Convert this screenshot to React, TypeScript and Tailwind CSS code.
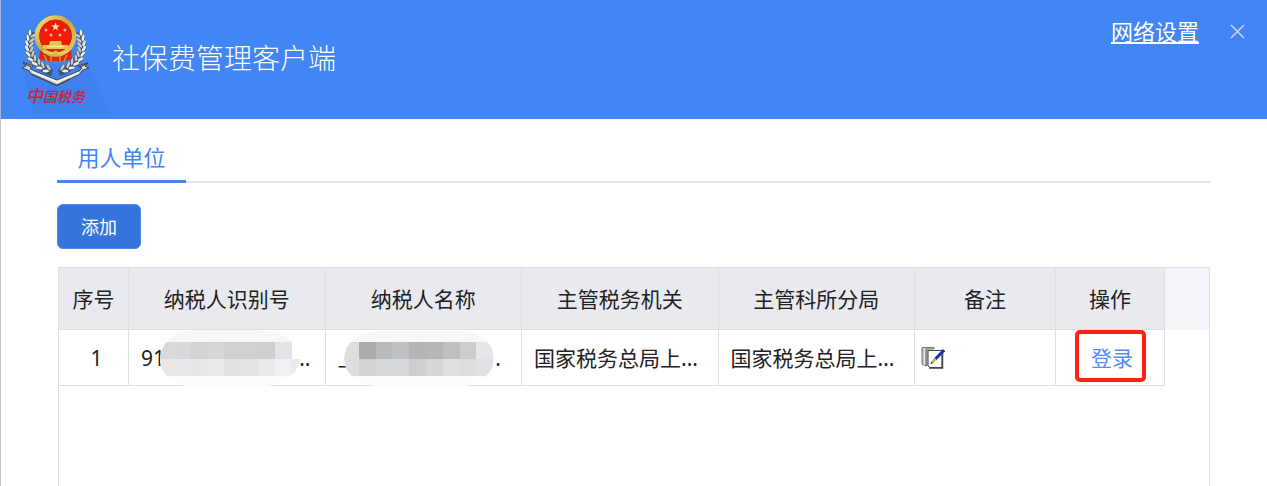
import clsx from "clsx";

type Unit = {
  id: number;
  authority: string;
  branch: string;
};

const units: Unit[] = [
  { id: 1, authority: "国家税务总局上...", branch: "国家税务总局上..." },
];

const headers = [
  "序号",
  "纳税人识别号",
  "纳税人名称",
  "主管税务机关",
  "主管科所分局",
  "备注",
  "操作",
];

const idMask = {
  outline: "M34 0 H96 Q122 1 132 12 V29 H140 Q139 42 124 50 Q112 57 98 57 H30 Q1 51 0 29 Q2 3 34 0 Z",
  top: ["#dad9d9", "#d5d9de", "#d3d3d5", "#d6d6d6", "#d0d0d2", "#d0d0d1", "#d0cfcf", "#e2e4e7"],
  bottom: ["#e9e7e6", "#e7e9ec", "#e7e7e8", "#edeae8", "#e2e2e3", "#e3e3e4", "#ebebec", "#eff1f5", "#eaebed"],
};

const nameMask = {
  outline: "M34 1 H116 Q149 4 150 29 Q149 50 118 57 H34 Q1 51 0 29 Q2 4 34 1 Z",
  top: ["#dedddd", "#adabaa", "#b9babc", "#bfc0c3", "#b4b4b5", "#b6b6b6", "#bfbfc0", "#cdcdce", "#e4e6ea"],
  bottom: ["#dedddd", "#d3d2d1", "#d6d9db", "#d6d9da", "#cdced0", "#d5d6d8", "#e0e0e1", "#dfdcda", "#e0e1e4"],
};

/** Pixelated pill that hides private values. */
function Mask({
  id,
  width,
  offset,
  colors,
}: {
  id: string;
  width: number;
  offset: number;
  colors: { outline: string; top: string[]; bottom: string[] };
}) {
  return (
    <svg width={width} height={57} viewBox={`0 0 ${width} 57`} aria-hidden="true">
      <clipPath id={id}>
        <path d={colors.outline} />
      </clipPath>
      <g clipPath={`url(#${id})`} shapeRendering="crispEdges">
        <rect width={width} height="57" fill="#f8f8f8" />
        <rect y="46" width={width} height="11" fill="#fcfcfb" />
        {colors.top.map((c, i) => (
          <rect key={i} x={offset + i * 16.8} y="12" width="17" height="17" fill={c} />
        ))}
        {colors.bottom.map((c, i) => (
          <rect key={i} x={offset + i * 16.8} y="29" width="17" height="17" fill={c} />
        ))}
      </g>
    </svg>
  );
}

const leaves = [
  [32, 33, -30],
  [30, 38, -20],
  [29, 43, -10],
  [29, 48, 2],
  [30, 53, 14],
  [32, 58, 26],
  [36, 62, 38],
  [40, 66, 50],
  [46, 69, 62],
];

function Wreath() {
  return (
    <g>
      <path d="M33 32 Q26 46 34 60 Q42 70 52 73" fill="none" stroke="#3d5878" strokeWidth="7" />
      {leaves.map(([x, y, r]) => (
        <g key={y} transform={`translate(${x} ${y}) rotate(${-r})`}>
          <ellipse cx="-2" cy="1" rx="2" ry="4.4" fill="#38434f" transform="rotate(-30)" />
          <ellipse cx="-2" cy="0" rx="1.4" ry="3.6" fill="#eceff3" transform="rotate(-30)" />
          <ellipse cx="3" cy="1" rx="2" ry="4.400" fill="#4a545f" transform="rotate(30)" />
          <ellipse cx="3" cy="0" rx="1.3" ry="3.4" fill="#c3cbd4" transform="rotate(30)" />
        </g>
      ))}
    </g>
  );
}

function Emblem() {
  return (
    <svg width="111" height="119" viewBox="0 0 111 119" role="img" aria-label="中国税务">
      <defs>
        <linearGradient id="gold" x1="0" y1="0" x2="1" y2="1">
          <stop offset="0" stopColor="#f4df7a" />
          <stop offset="0.5" stopColor="#c9a63a" />
          <stop offset="1" stopColor="#e8cd5e" />
        </linearGradient>
      </defs>
      <path d="M22 66 L33 113 H110 L87 62 Z" fill="#3f80ef" />
      <Wreath />
      <g transform="translate(111 0) scale(-1 1)">
        <Wreath />
      </g>
      {/* ribbon */}
      <path d="M23 62 L33 66 L30 68.500 L34 71 L57 80 L79 71 L82 68 L78 66 L88 63 L85 66 L89 68 L82 70.500 L80 74 L57 85.500 L31 74 L29 70.500 L22 68 L26 66 Z" fill="#cfd4da" stroke="#3e4853" strokeWidth="1" />
      <path d="M32 71.500 L57 82 L79 72.500" fill="none" stroke="#f6f7f9" strokeWidth="1.5" />
      <path d="M31 74 L57 85.500 L70 79" fill="none" stroke="#454d57" strokeWidth="1.5" />
      <path d="M23 63 L31 67 M88 63 L80 67" stroke="#3e4853" strokeWidth="1.2" />
      {/* base drapes */}
      <path d="M40 49 H71 L72 59 L65 61 H46 L39 59 Z" fill="#e5210f" />
      <path d="M44 55 L47 61 M67 55 L64 61 M51 56 V61 M60 56 V61" stroke="#d8ae36" strokeWidth="1.2" />
      <circle cx="55.500" cy="36" r="18.500" fill="#f21a08" stroke="url(#gold)" strokeWidth="4.500" />
      <circle cx="55.500" cy="36" r="16" fill="none" stroke="#b33116" strokeWidth="0.800" />
      <path d="M55.500 22.500 l1.100 3 h3.100 l-2.500 1.900 0.900 3 -2.600 -1.800 -2.600 1.800 0.900 -3 -2.500 -1.900 h3.100 Z" fill="#ffeeb0" />
      {[
        [46, 30],
        [65, 30],
        [51, 35],
        [60, 35],
      ].map(([x, y]) => (
        <circle key={`${x}-${y}`} cx={x} cy={y} r="1.5" fill="#f8b591" />
      ))}
      <path d="M50 41 H61 L62 45 H68 V49 H43 V45 H49 Z" fill="#e5c54b" />
      <path d="M47 46.500 H64" stroke="#f6e89a" strokeWidth="1.5" />
      <path d="M43 51 Q55 56 68 51" fill="none" stroke="#e7cd5a" strokeWidth="2" />
      <circle cx="55.500" cy="53" r="2.500" fill="#ddb842" />
      <text x="26" y="102" fill="#cb2236" fontSize="14" fontWeight="500" fontStyle="italic">
        <tspan fontSize="17">中</tspan>国税务
      </text>
    </svg>
  );
}

function NoteIcon() {
  return (
    <svg width="24" height="24" viewBox="0 0 24 24" aria-hidden="true">
      <path d="M1 1.500 H13 V3 H6 V20 L1 18.500 Z" fill="#b9b9b9" stroke="#777" />
      <path d="M3.500 2 V19" stroke="#e8e8e8" strokeWidth="1.5" />
      <path d="M5 2.500 V20" stroke="#777" />
      <path d="M7 4.500 H21 V21.500 H9 L7 20 Z" fill="#fff" stroke="#444" />
      <path d="M8 22 H21.500 V6" fill="none" stroke="#444" strokeWidth="1.5" />
      <path d="M23 4 L14 13.500" stroke="#1637b5" strokeWidth="3" />
      <path d="M14.500 12.500 L11 17" stroke="#b7ab62" strokeWidth="2.5" />
      <path d="M11 16 L10 18" stroke="#555" strokeWidth="1.5" />
    </svg>
  );
}

const cell = "border-r border-b border-[#dde1d9]";

export default function App() {
  return (
    <div className="flex min-h-screen flex-col border-l border-[#c4c4c4] bg-white font-['Noto_Sans','Noto_Sans_CJK_SC',sans-serif] text-[#222]">
      <header className="-ml-px flex h-[119px] items-start border-l border-[#9fb4d8] bg-[#4285f4] text-white">
        <div className="-ml-px shrink-0">
          <Emblem />
        </div>
        <h1 className="mt-10 ml-px flex-1 text-[28px] leading-9 font-light">社保费管理客户端</h1>
        <a href="#network" className="mt-[15px] text-[22px] leading-8 underline underline-offset-2">
          网络设置
        </a>
        <button type="button" aria-label="关闭" className="mt-[19px] mr-4 ml-6 p-1">
          <svg width="20" height="16" viewBox="0 0 20 16" aria-hidden="true">
            <path d="M4 2 L17 15 M17 2 L4 15" stroke="#c6d6f2" strokeWidth="1.5" />
          </svg>
        </button>
      </header>

      <main className="flex flex-1 flex-col px-14">
        <nav className="flex pt-4 shadow-[inset_0_-2px_0_#e6e7eb]">
          <a
            href="#units"
            className="flex h-12 w-[129px] items-center justify-center border-b-3 border-[#4285f4] text-[22px] text-[#4285f4]"
          >
            用人单位
          </a>
        </nav>

        <button
          type="button"
          className="mt-[21px] h-[45px] w-[84px] rounded-md border border-[#4b89ef] bg-[#3574db] text-lg text-white"
        >
          添加
        </button>

        <div className="mx-px mt-[18px] flex-1 border-x border-t border-[#dde1d9]">
          <table className="w-full table-fixed border-separate border-spacing-0 text-[21px] leading-7">
            <colgroup>
              <col className="w-[70px]" />
              <col />
              <col />
              <col />
              <col />
              <col className="w-[141px]" />
              <col className="w-[109px]" />
              <col className="w-[44px]" />
            </colgroup>
            <thead>
              <tr className="h-[62px] bg-[#e8eaf0]">
                {headers.map((h) => (
                  <th key={h} scope="col" className={clsx(cell, "font-normal")}>
                    {h}
                  </th>
                ))}
                <td className="bg-[#f3f5fa]" />
              </tr>
            </thead>
            <tbody>
              {units.map((u) => (
                <tr key={u.id} className="h-14">
                  <td className={clsx(cell, "pl-1.5 text-center")}>{u.id}</td>
                  <td className={clsx(cell, "relative pr-3.5 pl-3")}>
                    <div className="flex justify-between">
                      <span>91</span>
                      <span>..</span>
                    </div>
                    <div className="absolute top-0 left-[31px]">
                      <Mask id="mask-id" width={140} offset={-3} colors={idMask} />
                    </div>
                  </td>
                  <td className={clsx(cell, "relative pr-5 pl-3")}>
                    <div className="flex justify-between">
                      <span>上</span>
                      <span>.</span>
                    </div>
                    <div className="absolute top-0 left-[18px]">
                      <Mask id="mask-name" width={150} offset={-2} colors={nameMask} />
                    </div>
                  </td>
                  <td className={clsx(cell, "pl-3 whitespace-nowrap")}>{u.authority}</td>
                  <td className={clsx(cell, "pl-3 whitespace-nowrap")}>{u.branch}</td>
                  <td className={clsx(cell, "pl-1.5")}>
                    <button type="button" aria-label="编辑备注" className="block">
                      <NoteIcon />
                    </button>
                  </td>
                  <td className={clsx(cell, "relative pl-1 text-center")}>
                    <a href="#login" className="text-[#4f8ef5]">
                      登录
                    </a>
                    <div className="pointer-events-none absolute top-0 right-[18px] h-[52px] w-[71px] rounded-[5px] border-4 border-[#ff2013]" />
                  </td>
                  <td />
                </tr>
              ))}
            </tbody>
          </table>
        </div>
      </main>
    </div>
  );
}
